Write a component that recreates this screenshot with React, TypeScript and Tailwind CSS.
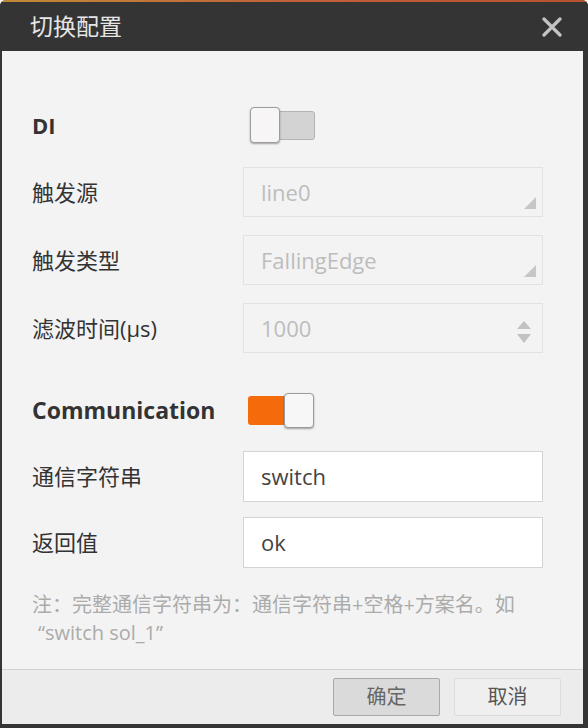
import React from "react";

const Toggle = ({ on }: { on: boolean }) => {
  if (on) {
    return (
      <div className="flex items-center h-[36px]">
        <div className="w-[37px] h-[29px] bg-[#f56b0c] rounded-l-[3px]"></div>
        <div className="w-[30px] h-[35px] -ml-[1px] bg-[#f7f7f7] border border-[#9c9c9c] rounded-[4px] shadow-[0_1px_2px_rgba(0,0,0,0.35)]"></div>
      </div>
    );
  }
  return (
    <div className="flex items-center h-[36px]">
      <div className="w-[30px] h-[36px] bg-[#f7f5f5] border border-[#9c9c9c] rounded-[4px] shadow-[0_1px_2px_rgba(0,0,0,0.35)] relative z-10"></div>
      <div className="w-[36px] h-[29px] -ml-[1px] bg-[#d3d3d3] border border-[#b3b3b3] rounded-r-[3px]"></div>
    </div>
  );
};

const Field = ({
  value,
  disabled,
  kind,
}: {
  value: string;
  disabled?: boolean;
  kind?: "select" | "spin";
}) => (
  <div
    className={
      disabled
        ? "relative w-[300px] h-[50px] border border-[#e2e2e2] bg-[#f3f3f3] flex items-center pl-[17px] text-[22px] text-[#bdbdbd]"
        : "relative w-[300px] h-[51px] border border-[#d4d4d4] bg-white flex items-center pl-[17px] text-[22px] text-[#444]"
    }
  >
    {value}
    {kind === "select" && (
      <svg className="absolute right-[6px] bottom-[7px]" width="12" height="12" viewBox="0 0 12 12">
        <polygon points="12,0 12,12 0,12" fill="#c6c6c6" />
      </svg>
    )}
    {kind === "spin" && (
      <svg className="absolute right-[10px] top-[17px]" width="16" height="23" viewBox="0 0 16 23">
        <polygon points="8,0 15,8 1,8" fill="#c2c2c2" />
        <polygon points="1,13 15,13 8,22" fill="#c2c2c2" />
      </svg>
    )}
  </div>
);

const Row = ({ label, children, className }: { label: string; children: React.ReactNode; className: string }) => (
  <div className={"flex items-center " + className}>
    <div className="w-[211px] text-[22px] text-[#333]">{label}</div>
    {children}
  </div>
);

const App = () => {
  return (
    <div className="w-[588px] h-[728px] bg-[#353535] flex flex-col font-['Open_Sans','Noto_Sans_CJK_SC',sans-serif] overflow-hidden rounded-t-[6px]">
      <div className="h-[2px] bg-gradient-to-r from-[#c08a35] via-[#c0603a] to-[#b8522e]"></div>
      <div className="h-[49px] flex items-center justify-between pl-[30px] pr-[26px] bg-[#343434]">
        <span className="text-[23px] text-[#e6e6e6] leading-none">切换配置</span>
        <svg width="20" height="20" viewBox="0 0 20 20">
          <path d="M2 2 L18 18 M18 2 L2 18" stroke="#c4c4c4" strokeWidth="3.2" strokeLinecap="round" />
        </svg>
      </div>
      <div className="ml-[2px] mr-[5px] flex-1 flex flex-col">
        <div className="flex-1 bg-[#f3f3f3] pl-[30px] pt-[56px]">
          <div className="flex items-center">
            <div className="w-[211px] text-[22px] font-bold text-[#333]">DI</div>
            <div className="ml-[7px]">
              <Toggle on={false} />
            </div>
          </div>
          <Row label="触发源" className="mt-[24px]">
            <Field value="line0" disabled kind="select" />
          </Row>
          <Row label="触发类型" className="mt-[18px]">
            <Field value="FallingEdge" disabled kind="select" />
          </Row>
          <Row label="滤波时间(μs)" className="mt-[18px]">
            <Field value="1000" disabled kind="spin" />
          </Row>
          <div className="flex items-center mt-[39px]">
            <div className="w-[211px] text-[23px] font-bold text-[#333]">Communication</div>
            <div className="ml-[5px]">
              <Toggle on />
            </div>
          </div>
          <Row label="通信字符串" className="mt-[23px]">
            <Field value="switch" />
          </Row>
          <Row label="返回值" className="mt-[15px]">
            <Field value="ok" />
          </Row>
          <p className="mt-[23px] w-[520px] text-[20px] leading-[28px] text-[#ababab]">
            注：完整通信字符串为：通信字符串+空格+方案名。如
            <br />
            <span className="ml-[6px]">“switch sol_1”</span>
          </p>
        </div>
        <div className="h-[55px] bg-[#ececec] border-t border-[#d2d2d2] flex items-start justify-end gap-[14px] pr-[22px] pt-[8px]">
          <button className="w-[107px] h-[38px] bg-[#dadada] border border-[#a9a9a9] rounded-[2px] text-[20px] text-[#666]">
            确定
          </button>
          <button className="w-[107px] h-[38px] bg-[#efefef] border border-[#dcdcdc] rounded-[2px] text-[20px] text-[#555]">
            取消
          </button>
        </div>
        <div className="h-[4px]"></div>
      </div>
    </div>
  );
};

export default App;
